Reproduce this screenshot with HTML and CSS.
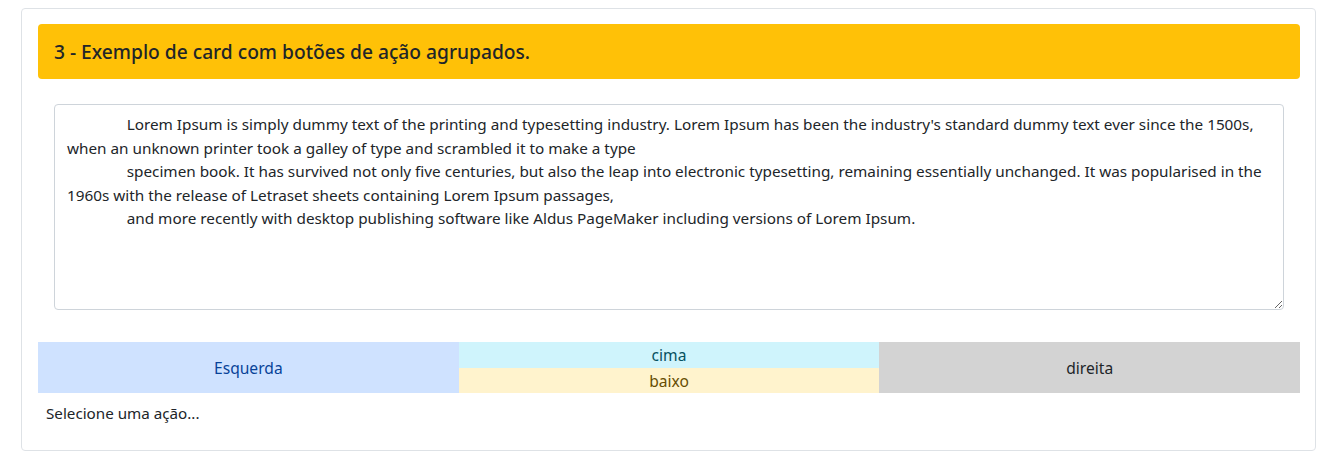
FILE: index.html
```html
<!DOCTYPE html>
<html lang="pt-BR">
<head>
    <meta charset="UTF-8">
    <meta name="viewport" content="width=device-width, initial-scale=1.0">
    <title>Cards com ações</title>
    <link rel="stylesheet" href="styles.css">
</head>
<body>
    <div class="card">
        <div class="card-header">
            <h5>3 - Exemplo de card com botões de ação agrupados.</h5>
        </div>
        <div class="card-text">
            <textarea rows="8">               Lorem Ipsum is simply dummy text of the printing and typesetting industry. Lorem Ipsum has been the industry's standard dummy text ever since the 1500s, when an unknown printer took a galley of type and scrambled it to make a type
               specimen book. It has survived not only five centuries, but also the leap into electronic typesetting, remaining essentially unchanged. It was popularised in the 1960s with the release of Letraset sheets containing Lorem Ipsum passages,
               and more recently with desktop publishing software like Aldus PageMaker including versions of Lorem Ipsum.</textarea>
        </div>
        <div class="btn-group">
            <button class="btn btn-left">Esquerda</button>
            <div class="btn-stack">
                <button class="btn btn-up">cima</button>
                <button class="btn btn-down">baixo</button>
            </div>
            <button class="btn btn-right">direita</button>
        </div>
        <p class="status">Selecione uma ação...</p>
    </div>
</body>
</html>
```

FILE: styles.css
```css
body {
    font-family: "Noto Sans", Arial, sans-serif;
    color: #212529;
    background-color: #fff;
    margin: 8px 27px 0 21px;
}
.card {
    border: 1px solid #dee2e6;
    border-radius: 4px;
    padding: 15px 15px 16px 16px;
    height: 410px;
}
.card-header {
    background-color: #ffc107;
    border-radius: 4px;
    padding: 16px;
    height: 23px;
}
.card-header h5 {
    margin: 0;
    font-size: 19.2px;
    font-weight: 500;
    line-height: 23px;
}
.card-text {
    padding: 25px 16px 0;
}
textarea {
    display: block;
    box-sizing: border-box;
    width: 100%;
    height: 206px;
    padding: 8px 12px;
    border: 1px solid #ced4da;
    border-radius: 4px;
    font-family: inherit;
    font-size: 15.3px;
    line-height: 23.6px;
    color: #212529;
    resize: vertical;
}
.btn-group {
    display: grid;
    grid-template-columns: 1fr 1fr 1fr;
    margin-top: 32px;
    height: 51px;
}
.btn-stack {
    display: grid;
    grid-template-rows: 26px 25px;
}
.btn {
    border: none;
    margin: 0;
    padding: 0;
    font-family: inherit;
    font-size: 15.6px;
}
.btn-left {
    background-color: #cfe2ff;
    color: #084298;
}
.btn-up {
    background-color: #cff4fc;
    color: #055160;
}
.btn-down {
    background-color: #fff3cd;
    color: #664d03;
}
.btn-right {
    background-color: #d3d3d3;
    color: #212529;
}
.status {
    margin: 10px 0 0 8px;
    font-size: 15.2px;
}
```
